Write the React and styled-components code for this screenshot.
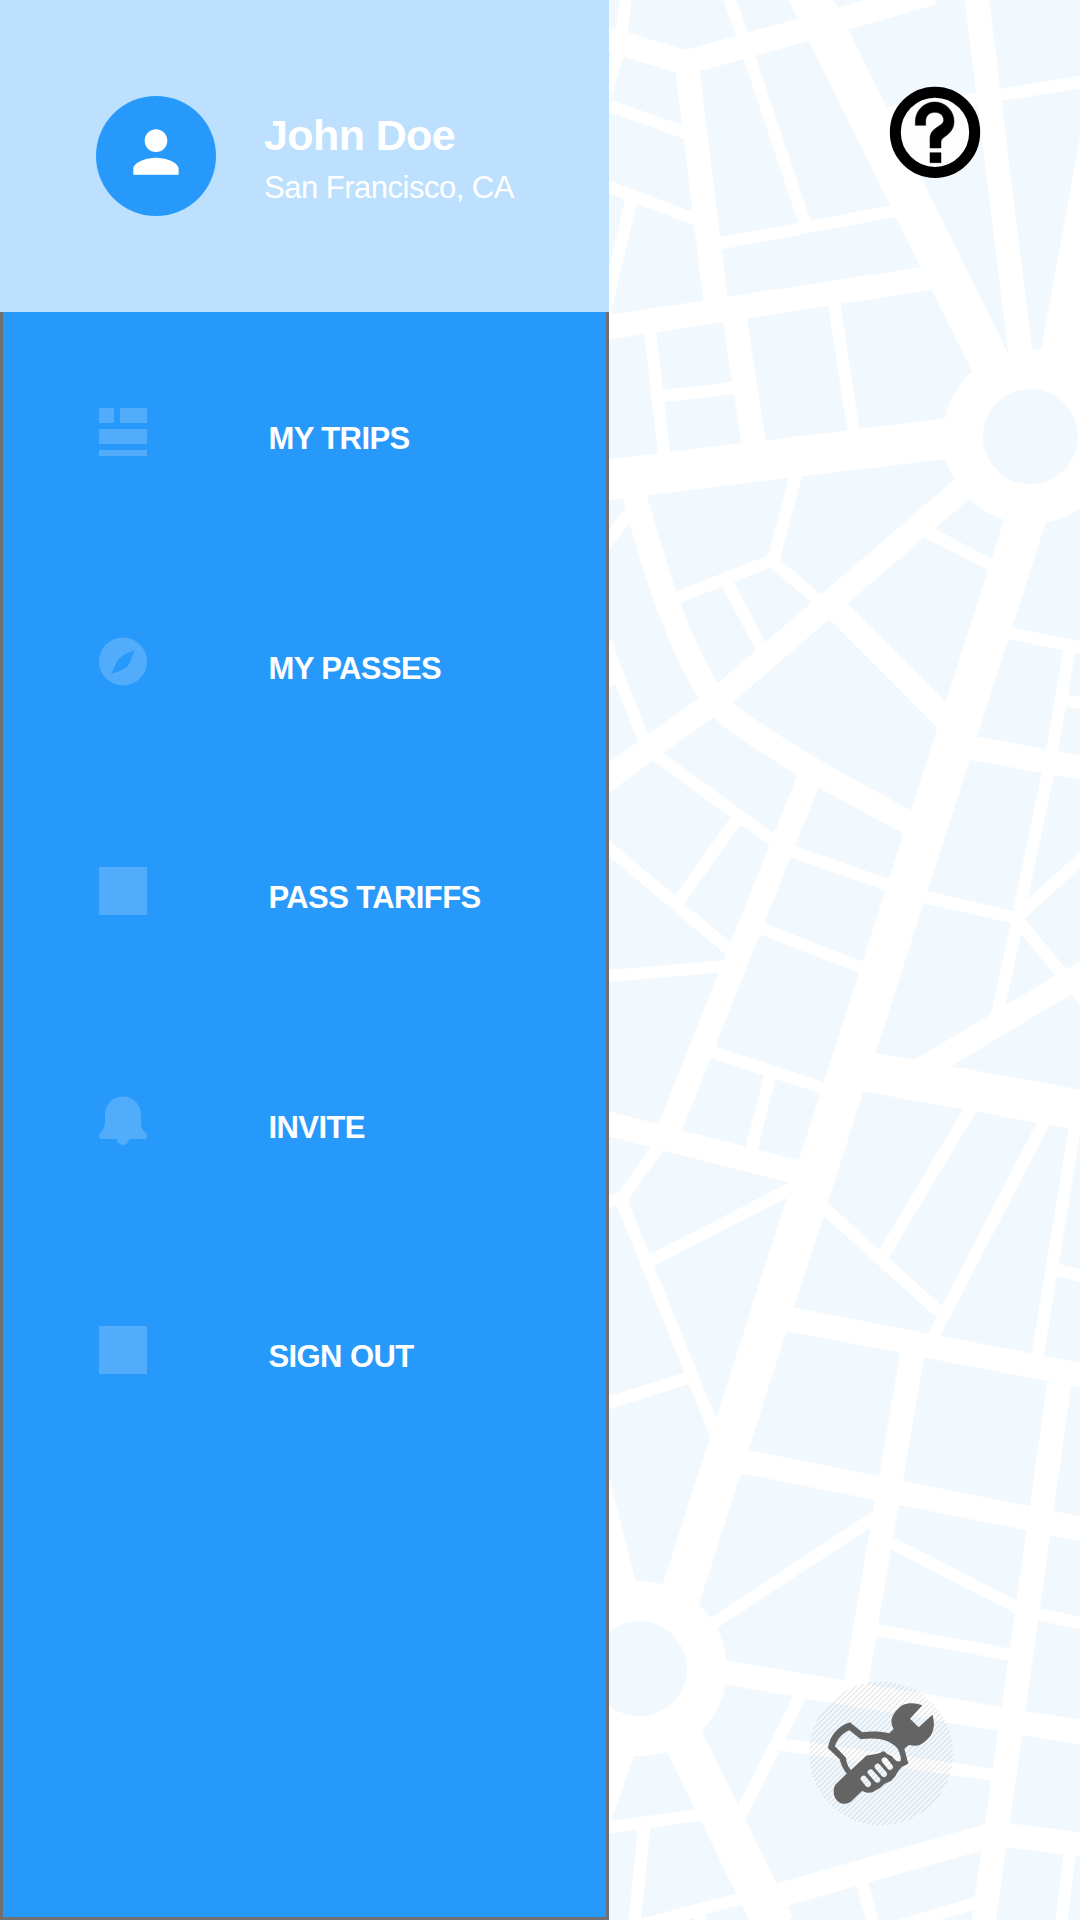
import React from "react";
import styled, { createGlobalStyle } from "styled-components";

const GlobalStyle = createGlobalStyle`
  * {
    box-sizing: border-box;
  }
  body {
    margin: 0;
    background: #ffffff;
    font-family: "Liberation Sans", Arial, sans-serif;
  }
`;

const Screen = styled.div`
  display: flex;
  width: 1080px;
  height: 1920px;
  overflow: hidden;
`;

const Drawer = styled.aside`
  display: flex;
  flex-direction: column;
  flex: none;
  width: 609px;
  height: 100%;
`;

const ProfileHeader = styled.header`
  display: flex;
  align-items: center;
  gap: 48px;
  height: 312px;
  padding-left: 96px;
  background: #bce0fd;
`;

const Avatar = styled.div`
  display: flex;
  align-items: center;
  justify-content: center;
  width: 120px;
  height: 120px;
  padding-bottom: 8px;
  border-radius: 50%;
  background: #2699fb;
`;

const ProfileText = styled.div`
  display: flex;
  flex-direction: column;
  gap: 12px;
  padding-top: 4px;
  color: #ffffff;
`;

const ProfileName = styled.h1`
  margin: 0;
  font-size: 43px;
  font-weight: 700;
  line-height: 48px;
  letter-spacing: -0.6px;
`;

const ProfilePlace = styled.p`
  margin: 0;
  font-size: 31px;
  line-height: 34px;
  letter-spacing: -0.5px;
`;

const MenuPanel = styled.nav`
  flex: 1;
  padding-top: 96px;
  background: #2699fb;
  border: solid #707070;
  border-width: 0 3px 3px;
`;

const MenuItem = styled.a`
  display: flex;
  gap: 121.5px;
  height: 229.5px;
  padding-left: 96px;
  color: #ffffff;
`;

const MenuIcon = styled.svg`
  flex: none;
  width: 48px;
  height: 49px;
  overflow: visible;
  fill: rgba(255, 255, 255, 0.2);
`;

const MenuLabel = styled.span`
  padding-top: 14px;
  font-size: 31px;
  font-weight: 700;
  line-height: 34px;
  letter-spacing: -0.6px;
`;

const MapPane = styled.main`
  position: relative;
  flex: 1;
  height: 100%;
  background: #f1f9ff;
`;

const StreetMap = styled.svg`
  display: block;
  width: 471px;
  height: 1920px;
`;

const HelpButton = styled.button`
  position: absolute;
  top: 86px;
  right: 99px;
  width: 92px;
  height: 92px;
  padding: 0;
  border: 0;
  background: none;
`;

const RepairButton = styled.button`
  position: absolute;
  top: 1681px;
  right: 127.5px;
  width: 144px;
  height: 145px;
  padding: 0;
  border: 0;
  background: none;
`;

const ButtonDrawing = styled.svg`
  display: block;
  width: 100%;
  height: 100%;
`;

const avenues = [
  "M620 -28L1190 1128L1280 1310",
  "M0 1442L1035 1316L1291 1288",
  "M1502 410L1370 1130L1330 1300",
  "M1291 1513L150 5072",
  "M740 3204L1440 3330L1500 3341",
  "M84 4900L-35 4435",
  "M120 4953L269 5257L525 5780",
];

const streets = [
  "M0 110L27 118L256 188L728 56L925 0L1000 -21",
  "M260 187L350 930",
  "M400 930L405 961L468 1375",
  "M0 986L27 982L977 836L1050 825",
  "M1125 -50L1131 0L1260 1050L1290 1300",
  "M98 1450L106 1495C165 1710 235 1940 345 2105C400 2170 620 2310 960 2485",
  "M1180 1386L1084 1469L377 2077L320 2121L0 2352",
  "M690 1808L715 1833L1025 2145L1060 2180",
  "M1080 2237L1440 2303L1480 2310",
  "M638 2308L200 3407",
  "M0 3365L27 3372L583 3515L640 3529",
  "M960 3212L1440 2925L1480 2901",
  "M540 3952L1440 4125L1480 4133",
  "M940 4044L764 5070",
  "M1378 4150L1192 5471L1148 5780",
  "M400 4378L1440 4586L1480 4594",
  "M300 5005L1440 5197L1480 5204",
  "M80 5220L62 5271L-5 5463",
  "M480 5703L1190 5501L1440 5533L1480 5538",
];

const lanes = [
  "M78 -10L65 95L52 165L14 293",
  "M387 -10L449 174L613 664L617 680",
  "M0 308L27 317L247 395L260 400",
  "M0 551L27 561L279 655L300 663",
  "M95 596L12 945",
  "M330 736L910 628",
  "M149 980L192 1359L194 1380",
  "M175 1190L415 1162",
  "M703 915L760 1289",
  "M850 342L880 337L1128 297L1440 246L1480 240",
  "M90 1535L27 1619L10 1642",
  "M593 1410L587 1430L519 1682",
  "M519 1680L507 1685L225 1795",
  "M516 1682L525 1690L660 1805",
  "M384 1752L488 1951",
  "M975 1593L1190 1703",
  "M1200 1894L1225 1899L1440 1942L1480 1950",
  "M1410 1940L1350 2287L1343 2323L1258 2730",
  "M1388 2101L1440 2109L1480 2115",
  "M1480 2544L1440 2580L1255 2748",
  "M950 2685L1260 2757",
  "M1258 2740L1190 3050",
  "M1250 2757L1470 3023",
  "M20 1927L27 1956L65 2053L130 2215L140 2240",
  "M60 2025L20 2045",
  "M155 2257L520 2522",
  "M540 2541L880 2661",
  "M408 2460L230 2711",
  "M0 2522L27 2545L390 2850",
  "M0 2930L27 2928L380 2898",
  "M470 2780L800 2909",
  "M320 3150L690 3271",
  "M511 3225L452 3455",
  "M173 3443L65 3595L0 3612",
  "M66 3596L70 3617L306 4200L355 4320",
  "M155 3780L565 3570L620 3542",
  "M0 4216L27 4208L264 4134",
  "M1125 3300L1110 3330L852 3762",
  "M1340 3350L1330 3370L1000 4008",
  "M650 3604L1017 3935",
  "M1430 3360L1425 3382L1311 4076",
  "M1355 3805L1440 3827L1480 3837",
  "M300 4896L850 4535",
  "M850 4616L1280 4838",
  "M1295 4839L1440 4869L1480 4877",
  "M810 4886L1250 4968",
  "M0 5485L27 5482L320 5442",
  "M133 5480L102 5780",
  "M604 5082L415 5458",
  "M540 5233L1190 5326",
  "M440 5691L120 5776",
  "M297 5738L306 5780",
  "M784 5640L816 5760L820 5780",
  "M1145 5703L890 5780",
  "M1410 5550L1385 5760L1382 5780",
];

function CityMap() {
  return (
    <StreetMap viewBox="27 0 1413 5760" preserveAspectRatio="none">
      <g fill="none" stroke="#ffffff" strokeLinejoin="miter">
        <path d={avenues.join("")} strokeWidth="121" />
        <path d={streets.join("")} strokeWidth="72.5" />
        <path d={lanes.join("")} strokeWidth="36.5" />
      </g>
      <circle cx="1291" cy="1309.5" r="202.5" fill="none" stroke="#ffffff" strokeWidth="120" />
      <circle cx="118" cy="5006" r="202.5" fill="none" stroke="#ffffff" strokeWidth="120" />
      <circle cx="1291" cy="1309.5" r="142.5" fill="#f1f9ff" />
      <circle cx="118" cy="5006" r="142.5" fill="#f1f9ff" />
    </StreetMap>
  );
}

function PersonIcon() {
  return (
    <svg width="68" height="68" viewBox="0 0 24 24" fill="#ffffff">
      <path d="M12 12c2.21 0 4-1.79 4-4s-1.79-4-4-4-4 1.79-4 4 1.79 4 4 4zm0 2c-2.67 0-8 1.34-8 4v2h16v-2c0-2.66-5.33-4-8-4z" />
    </svg>
  );
}

function HelpIcon() {
  return (
    <ButtonDrawing viewBox="57 48 276 276">
      <ellipse cx="195" cy="187" rx="119" ry="120.5" fill="#fdfdfd" stroke="#000000" strokeWidth="33" />
      <path
        stroke="#000000"
        strokeWidth="1.5"
        d="M136 166V154A58 58 0 0 1 252 154C252 176 241 189 226 199C217 205 213 209 213 217V234H180V207C180 190 187 182 198 174C211 165 221 161 221 150C221 136 209 127 194 127C178 127 167 138 167 154V166ZM180 248H213V278H180Z"
      />
    </ButtonDrawing>
  );
}

function RepairIcon() {
  return (
    <ButtonDrawing viewBox="86 63 432 435">
      <defs>
        <pattern id="hatch" width="11.3" height="11.3" patternUnits="userSpaceOnUse" patternTransform="rotate(45)">
          <rect width="3" height="11.3" fill="rgba(112,112,112,0.2)" />
        </pattern>
        <mask id="handGaps" maskUnits="userSpaceOnUse" x="86" y="63" width="432" height="435">
          <rect x="86" y="63" width="432" height="435" fill="#ffffff" />
          <path d="M164 259L197 293C198 308 203 320 212 330L258 287C278 283 296 283 310 273L321 282L335 289C342 299 350 308 361 303C364 293 356 271 350 263C325 240 295 231 241 238L207 211C186 219 169 240 164 259Z" fill="#000000" />
          <path d="M250 356L263 372M271 337L291 359M292 320L311 342M313 301L329 321" stroke="#000000" strokeWidth="18" strokeLinecap="round" />
        </mask>
      </defs>
      <circle cx="302" cy="280.5" r="216" fill="url(#hatch)" />
      <g fill="#646464" mask="url(#handGaps)">
        <path d="M143 265C146 233 171 197 209 187L215 192L246 217C275 213 304 215 327 220L340 207C334 197 332 187 334 177C338 160 353 145 367 135C384 127 407 128 426 136L389 176L415 202L456 164C464 188 461 208 452 226C435 246 421 259 401 257L385 255L372 266L384 311L365 320L353 334L345 349L332 363L313 371L299 384L284 392C277 399 259 401 246 392L219 418C208 431 198 432 188 431C170 428 159 411 160 392C161 380 164 374 170 369L207 333L203 346C188 329 181 311 178 298Z" />
      </g>
    </ButtonDrawing>
  );
}

const menu = [
  {
    label: "MY TRIPS",
    icon: <path d="M0 0h15v15H0zM21 0h27v15H21zM0 21h48v15H0zM0 42h48v6H0z" />,
  },
  {
    label: "MY PASSES",
    icon: (
      <path
        fillRule="evenodd"
        d="M24 -.5A24 24 0 1 1 24 47.500A24 24 0 1 1 24 -.5ZM36 12C29 14.500 22.500 17.500 19 22C16 26.500 15 31 12 36C20 33 26.500 31 29.500 27C32.500 22 33 18 36 12Z"
      />
    ),
  },
  { label: "PASS TARIFFS", icon: <path d="M0 0h48v48H0z" /> },
  {
    label: "INVITE",
    icon: (
      <path d="M24 -.5C34 -.5 42 7.500 42 17.500V26C42 31 44 33.500 46.500 35.500C48 37 48.500 39 47.500 40.500C47 41.500 46 42 45 42H30C29.700 45.500 27 48 24 48S18.300 45.500 18 42H3C2 42 1 41.500 .5 40.500C-.5 39 0 37 1.500 35.500C4 33 6 30 6 26V17.500C6 7.500 14 -.5 24 -.5Z" />
    ),
  },
  { label: "SIGN OUT", icon: <path d="M0 0h48v48H0z" /> },
];

export default function App() {
  return (
    <>
      <GlobalStyle />
      <Screen>
        <Drawer>
          <ProfileHeader>
            <Avatar>
              <PersonIcon />
            </Avatar>
            <ProfileText>
              <ProfileName>John Doe</ProfileName>
              <ProfilePlace>San Francisco, CA</ProfilePlace>
            </ProfileText>
          </ProfileHeader>
          <MenuPanel>
            {menu.map(({ label, icon }) => (
              <MenuItem key={label}>
                <MenuIcon viewBox="0 0 48 49">{icon}</MenuIcon>
                <MenuLabel>{label}</MenuLabel>
              </MenuItem>
            ))}
          </MenuPanel>
        </Drawer>
        <MapPane>
          <CityMap />
          <HelpButton aria-label="Help">
            <HelpIcon />
          </HelpButton>
          <RepairButton aria-label="Repair service">
            <RepairIcon />
          </RepairButton>
        </MapPane>
      </Screen>
    </>
  );
}
